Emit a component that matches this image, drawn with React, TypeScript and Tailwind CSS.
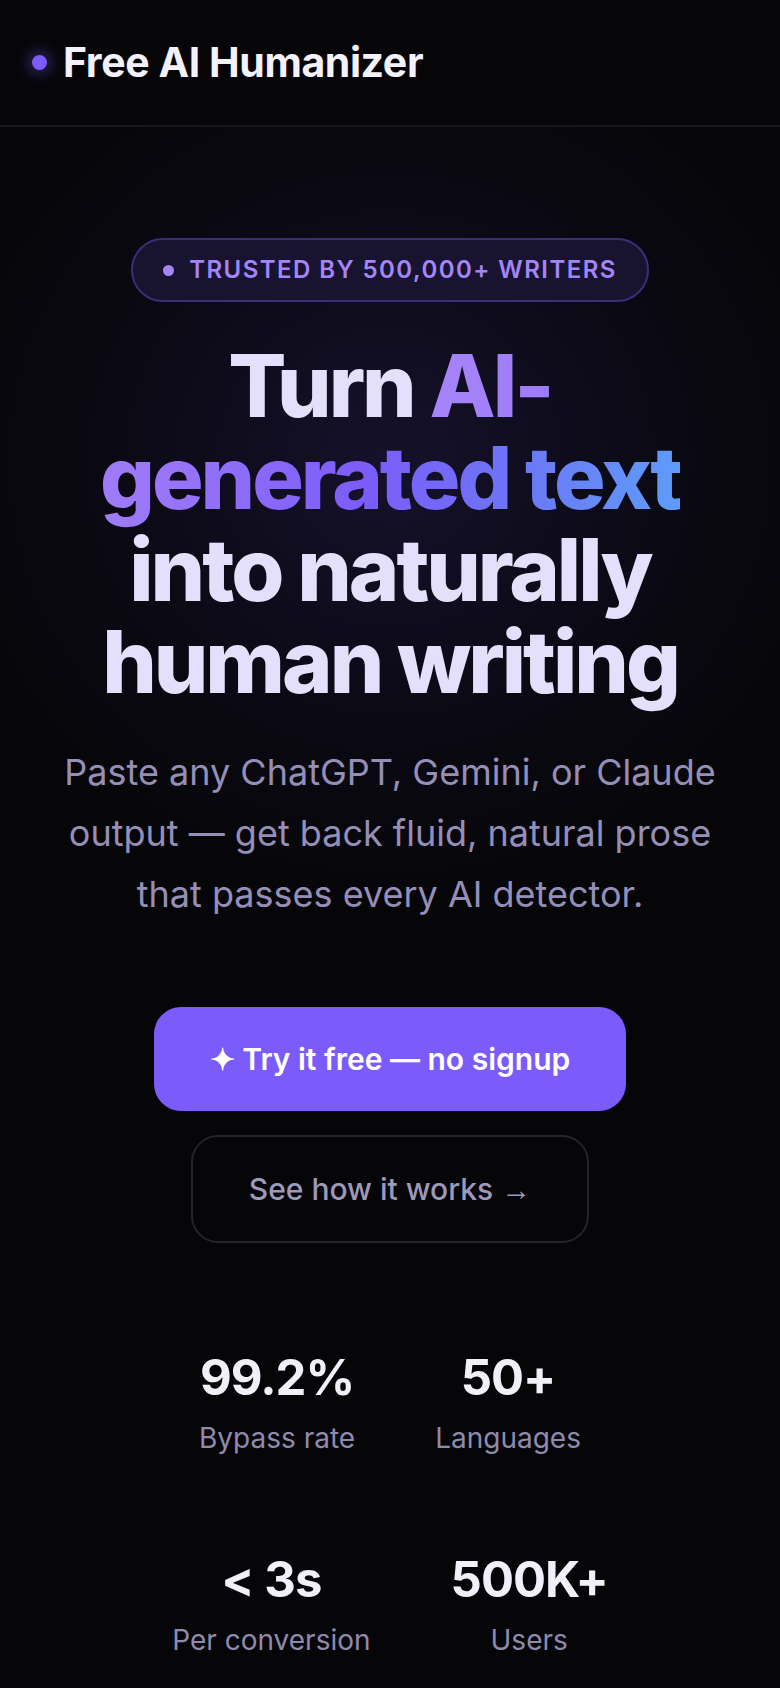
import React from "react";

const stats = [
  { value: "99.2%", label: "Bypass rate" },
  { value: "50+", label: "Languages" },
  { value: "< 3s", label: "Per conversion" },
  { value: "500K+", label: "Users" },
];

export default function App() {
  return (
    <div className="min-h-[1688px] bg-[#060609] text-white font-['Inter','Noto_Sans',sans-serif]">
      {/* header */}
      <header className="h-[127px] flex items-center gap-4 px-8 border-b-2 border-[#17171c] bg-[#060609]">
        <span className="w-[15px] h-[15px] rounded-full bg-[#7c5cfc] shadow-[0_0_14px_4px_rgba(124,92,252,0.35)]" />
        <span className="text-[41px] font-bold tracking-[-0.01em] text-[#f3f1fb] leading-none">
          Free AI Humanizer
        </span>
      </header>

      {/* hero */}
      <section className="flex flex-col items-center pt-[111px] px-8 bg-[radial-gradient(ellipse_60%_40%_at_50%_30%,#16112c_0%,#0b0a15_55%,#060609_100%)]">
        <div className="flex items-center gap-[15px] h-[64px] px-[30px] rounded-full border-2 border-[#3a2e78] bg-[#181430]">
          <span className="w-[11px] h-[11px] rounded-full bg-[#a385f7]" />
          <span className="text-[24px] font-semibold tracking-[0.06em] text-[#a385f7]">
            TRUSTED BY 500,000+ WRITERS
          </span>
        </div>

        <h1 className="mt-[38px] max-w-[640px] text-center text-[86px] leading-[92px] font-extrabold tracking-[-0.035em] text-[#e4dffa]">
          Turn{" "}
          <span className="bg-[linear-gradient(90deg,#a685fa_0%,#9a77f8_25%,#7b5cfa_55%,#6d74f6_75%,#5e9cf9_100%)] bg-clip-text text-transparent">
            AI-generated text
          </span>{" "}
          into naturally human writing
        </h1>

        <p className="mt-[34px] max-w-[680px] text-center text-[36px] leading-[61px] text-[#958fb8]">
          Paste any ChatGPT, Gemini, or Claude output — get back fluid, natural prose that passes every AI detector.
        </p>

        <button className="mt-[82px] h-[104px] px-14 rounded-[27px] bg-[#7b5cfb] text-white text-[30px] font-semibold">
          ✦ Try it free — no signup
        </button>
        <button className="mt-6 h-[108px] px-14 rounded-[27px] border-2 border-[#24242a] text-[#9d99b9] text-[30px] font-medium">
          See how it works <span className="font-['Liberation_Sans',sans-serif] font-normal">→</span>
        </button>
      </section>

      {/* stats */}
      <section className="mt-[105px] flex flex-wrap justify-center gap-x-20 gap-y-[90px] max-w-[500px] mx-auto pb-6">
        {stats.map((s) => (
          <div key={s.label} className="flex flex-col items-center">
            <span className="text-[49px] leading-[60px] font-bold tracking-[-0.02em] text-[#f1eff8]">
              {s.value}
            </span>
            <span className="mt-2 text-[28px] leading-[44px] text-[#8f8aae]">{s.label}</span>
          </div>
        ))}
      </section>
    </div>
  );
}
